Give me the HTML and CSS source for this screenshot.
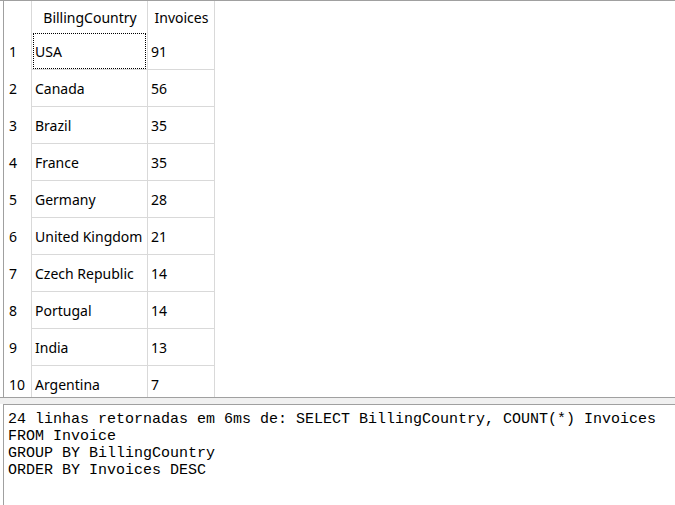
FILE: index.html
```html
<!DOCTYPE html>
<html>
<head>
<meta charset="utf-8">
<link rel="stylesheet" href="styles.css">
</head>
<body>
<div class="app">
  <div class="results">
    <div class="grid">
      <div class="hc rn"></div>
      <div class="hc">BillingCountry</div>
      <div class="hc">Invoices</div>

      <div class="rn">1</div><div class="c focus">USA</div><div class="c">91</div>
      <div class="rn">2</div><div class="c">Canada</div><div class="c">56</div>
      <div class="rn">3</div><div class="c">Brazil</div><div class="c">35</div>
      <div class="rn">4</div><div class="c">France</div><div class="c">35</div>
      <div class="rn">5</div><div class="c">Germany</div><div class="c">28</div>
      <div class="rn">6</div><div class="c">United Kingdom</div><div class="c">21</div>
      <div class="rn">7</div><div class="c">Czech Republic</div><div class="c">14</div>
      <div class="rn">8</div><div class="c">Portugal</div><div class="c">14</div>
      <div class="rn">9</div><div class="c">India</div><div class="c">13</div>
      <div class="rn">10</div><div class="c">Argentina</div><div class="c">7</div>
    </div>
  </div>
  <div class="splitter"></div>
  <div class="log">
    <pre class="msg">24 linhas retornadas em 6ms de: SELECT BillingCountry, COUNT(*) Invoices
FROM Invoice
GROUP BY BillingCountry
ORDER BY Invoices DESC</pre>
  </div>
</div>
</body>
</html>
```

FILE: styles.css
```css
html, body {
  margin: 0;
  padding: 0;
  background: #ffffff;
}
.app {
  width: 675px;
  height: 505px;
  display: flex;
  flex-direction: column;
  overflow: hidden;
}
.results {
  height: 396px;
  border-top: 1px solid #a0a0a0;
  border-bottom: 1px solid #a0a0a0;
  padding-left: 3px;
  overflow: hidden;
  flex: none;
}
.grid {
  height: 100%;
  border-left: 1px solid #a0a0a0;
  display: grid;
  grid-template-columns: 28px 116px 67px;
  grid-auto-rows: 37px;
  grid-template-rows: 32px;
  align-content: start;
  font-family: "Noto Sans", "Open Sans", sans-serif;
  font-size: 14px;
  color: #000;
  background:
    linear-gradient(#d9d9d9, #d9d9d9) 27px 0 / 1px 100% no-repeat,
    linear-gradient(#d9d9d9, #d9d9d9) 143px 0 / 1px 100% no-repeat,
    linear-gradient(#d9d9d9, #d9d9d9) 210px 0 / 1px 100% no-repeat;
}
.hc {
  display: flex;
  align-items: center;
  justify-content: center;
  padding-top: 1px;
}
.hc.rn {
  padding: 0;
}
.rn {
  display: flex;
  align-items: center;
  padding-left: 5px;
}
.c {
  display: flex;
  align-items: center;
  padding-left: 3px;
  border-bottom: 1px solid #d9d9d9;
  position: relative;
}
.focus::after {
  content: "";
  position: absolute;
  left: 1px;
  right: 2px;
  top: 0;
  bottom: 0;
  border: 1px dotted #000;
}
.splitter {
  height: 6px;
  background: #f0f0f0;
  flex: none;
}
.log {
  flex: 1;
  border-top: 1px solid #a0a0a0;
  margin-left: 3px;
  border-left: 1px solid #a0a0a0;
  padding: 6px 0 0 4px;
}
.msg {
  margin: 0;
  font-family: "Liberation Mono", "Courier New", monospace;
  font-size: 15px;
  line-height: 17px;
  color: #000;
}
```
